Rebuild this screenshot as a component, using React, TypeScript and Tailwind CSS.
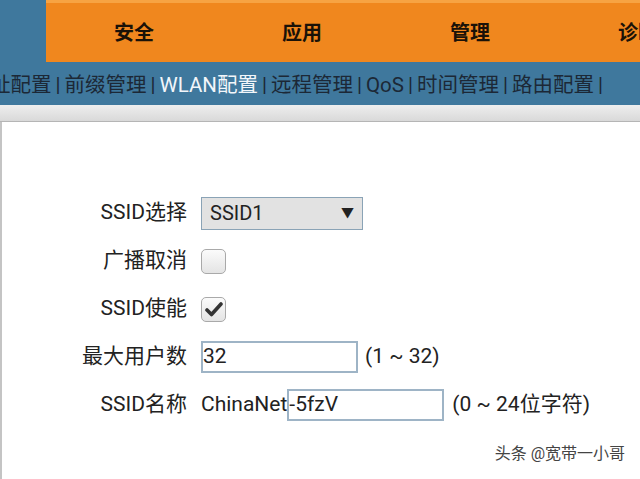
const font = "font-['Roboto','Noto_Sans_CJK_SC',sans-serif]";

const tabs = ['安全', '应用', '管理', '诊断'];

const navItems = ['址配置', '前缀管理', 'WLAN配置', '远程管理', 'QoS', '时间管理', '路由配置'];

function Checkbox({ checked }: { checked?: boolean }) {
  return (
    <div className="flex h-[25px] w-[25px] items-center justify-center rounded-[5px] border border-[#a9a9a9] bg-gradient-to-b from-[#fbfbfb] to-[#e4e4e4]">
      {checked && (
        <svg width="18" height="16" viewBox="0 0 18 16">
          <path d="M2 9 L6.5 13.5 L16 3" fill="none" stroke="#333" strokeWidth="3.6" strokeLinecap="round" strokeLinejoin="round" />
        </svg>
      )}
    </div>
  );
}

function Row({ label, children }: { label: string; children: React.ReactNode }) {
  return (
    <div className="flex h-[48px] items-center">
      <div className="w-[185px] text-right text-[21px] text-[#222]">{label}</div>
      <div className="ml-[14px] flex items-center">{children}</div>
    </div>
  );
}

export default function App() {
  return (
    <div className={`relative h-[479px] w-[640px] overflow-hidden bg-white ${font}`}>
      <header className="flex h-[62px] bg-[#3f789d]">
        <div className="w-[46px] shrink-0" />
        <div className="flex flex-1 border-t-[3px] border-[#f7a343] bg-[#f0871e] pl-[4px]">
          {tabs.map((t) => (
            <div key={t} className="flex w-[168px] shrink-0 items-center justify-center text-[20px] font-bold text-[#1a1208]">
              {t}
            </div>
          ))}
        </div>
      </header>

      <nav className="flex h-[43px] items-center whitespace-nowrap bg-[#3f789d] pt-[3px] text-[20.5px] text-[#1c2836]">
        <div className="-ml-[10px] flex items-center">
          {navItems.map((item) => (
            <span key={item} className="flex items-center">
              <span className={item === 'WLAN配置' ? 'text-[#f2f6fa]' : ''}>{item}</span>
              <span className="mx-[4px]">|</span>
            </span>
          ))}
        </div>
      </nav>

      <div className="h-[17px] border-b border-[#b5b5b5] bg-gradient-to-b from-[#eeeeee] to-[#d9d9d9]" />

      <main className="h-full border-l-2 border-[#c4c4c4] pt-[67px]">
        <Row label="SSID选择">
          <div className="flex h-[33px] w-[162px] items-center justify-between border border-[#8aa3b6] bg-[#e2e2e2] pl-[8px] pr-[8px] text-[20px] text-[#222]">
            <span>SSID1</span>
            <span className="text-[13px]">▼</span>
          </div>
        </Row>
        <Row label="广播取消">
          <Checkbox />
        </Row>
        <Row label="SSID使能">
          <Checkbox checked />
        </Row>
        <Row label="最大用户数">
          <div className="flex h-[32px] w-[157px] items-center border-2 border-[#9eb4c6] text-[21px] text-[#222]">32</div>
          <span className="ml-[7px] text-[21px] text-[#222]">(1 ~ 32)</span>
        </Row>
        <Row label="SSID名称">
          <span className="text-[21px] text-[#222]">ChinaNet</span>
          <div className="flex h-[32px] w-[157px] items-center border-2 border-[#9eb4c6] text-[21px] text-[#222]">-5fzV</div>
          <span className="ml-[8px] text-[21px] text-[#222]">(0 ~ 24位字符)</span>
        </Row>
      </main>

      <div className="absolute bottom-[13px] right-[15px] text-[16px] text-[#444] [text-shadow:0_0_2px_#fff]">
        头条 @宽带一小哥
      </div>
    </div>
  );
}
